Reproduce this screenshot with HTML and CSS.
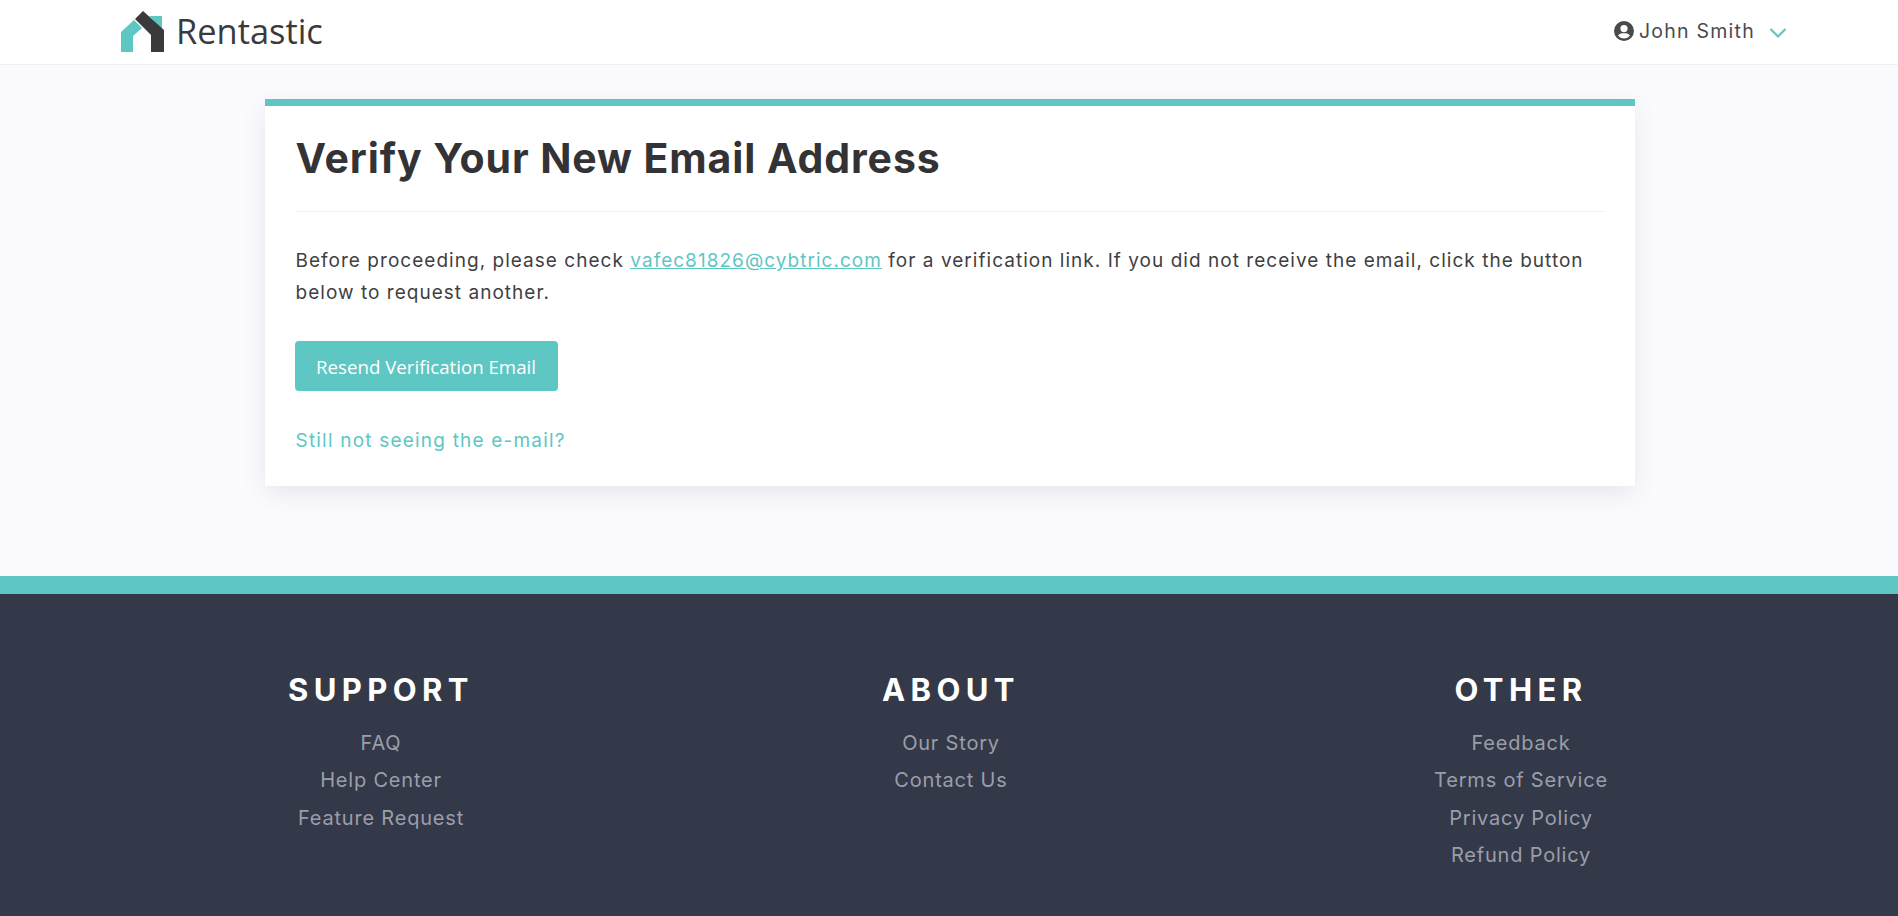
FILE: index.html
```html
<!DOCTYPE html>
<html lang="en">
<head>
  <meta charset="UTF-8" />
  <meta name="viewport" content="width=device-width, initial-scale=1.0" />
  <title>Rentastic</title>
  <link rel="stylesheet" href="styles.css">
</head>
<body>
  <header class="topbar">
    <a class="brand" href="#">
      <svg class="brand-logo" viewBox="0 0 44 41" width="44" height="41" aria-hidden="true">
        <path fill="#5ec6c3" d="M0 21 L13 9 L21 17 L12 25 L12 41 L0 41 Z" />
        <path fill="#5ec6c3" d="M28 5 L41 5 L41 18 Z" />
        <path fill="#3a3a3c" d="M22 0 L43 19 L43 41 L30 41 L30 24 L14 8 Z" />
      </svg>
      <span class="brand-name">Rentastic</span>
    </a>
    <div class="user-menu">
      <svg class="user-icon" viewBox="0 0 20 20" width="20" height="20" aria-hidden="true">
        <path fill="#4a4a4d" fill-rule="evenodd" d="M10 0a10 10 0 1 0 0 20a10 10 0 0 0 0-20zM10 4a3.6 3.6 0 1 1 0 7.2a3.6 3.6 0 0 1 0-7.2zM10 17.6a7.7 7.7 0 0 1-5.9-2.8c.7-1.6 2.3-2.6 4-2.6h3.8c1.7 0 3.3 1 4 2.6a7.7 7.7 0 0 1-5.9 2.8z" />
      </svg>
      <span class="user-name">John Smith</span>
      <svg class="user-caret" viewBox="0 0 18 12" width="18" height="12" aria-hidden="true">
        <path fill="none" stroke="#5ec6c3" stroke-width="2.2" d="M1.5 2 L9 9.5 L16.5 2" />
      </svg>
    </div>
  </header>

  <main class="content">
    <section class="card">
      <h1 class="card-title">Verify Your New Email Address</h1>
      <p class="card-text">Before proceeding, please check <a href="#" class="email-link">vafec81826@cybtric.com</a> for a verification link. If you did not receive the email, click the button below to request another.</p>
      <button class="resend-btn">Resend Verification Email</button>
      <a href="#" class="help-link">Still not seeing the e-mail?</a>
    </section>
  </main>

  <footer class="footer">
    <div class="footer-cols">
      <div class="footer-col">
        <h4>SUPPORT</h4>
        <a href="#">FAQ</a>
        <a href="#">Help Center</a>
        <a href="#">Feature Request</a>
      </div>
      <div class="footer-col">
        <h4>ABOUT</h4>
        <a href="#">Our Story</a>
        <a href="#">Contact Us</a>
      </div>
      <div class="footer-col">
        <h4>OTHER</h4>
        <a href="#">Feedback</a>
        <a href="#">Terms of Service</a>
        <a href="#">Privacy Policy</a>
        <a href="#">Refund Policy</a>
      </div>
    </div>
  </footer>
</body>
</html>
```

FILE: styles.css
```css
body { margin: 0; background: #fbfbff; color: #3f3f42; font-family: 'Inter', 'Noto Sans', sans-serif; font-size: 19px; height: 916px; overflow: hidden; }
a { text-decoration: none; }

.topbar { height: 65px; box-sizing: border-box; background: #fff; border-bottom: 1px solid #f0f0f3; display: flex; justify-content: space-between; align-items: center; padding: 0 111px 0 121px; }
.brand { display: flex; align-items: center; gap: 11px; color: #3a3a3c; }
.brand-logo { display: block; margin-bottom: 1px; }
.brand-name { font-family: 'Open Sans', sans-serif; font-size: 34.4px; margin-top: -3px; }
.user-menu { display: flex; align-items: center; margin-bottom: 3px; }
.user-name { font-size: 19.5px; margin-left: 5px; letter-spacing: 1.25px; color: #4a4a4d; }
.user-caret { margin-left: 14px; margin-top: 4px; }

.content { height: 511px; padding: 34px 0 0 1px; box-sizing: border-box; }
.card { width: 1370px; height: 387px; box-sizing: border-box; margin: 0 auto; padding: 0 30px 0 31px; background: #fff; border-top: 7px solid #5ec6c3; box-shadow: 0 8px 24px rgba(40,40,70,0.1); }
.card-title { margin: 0; padding: 29px 0; font-size: 41px; line-height: 47px; font-weight: 700; letter-spacing: 0.9px; color: #333336; border-bottom: 1px solid #f3f3f3; }
.card-text { margin: 33px 0 0; line-height: 32px; letter-spacing: 1.03px; }
.email-link { color: #5ec6c3; text-decoration: underline; }
.resend-btn { display: block; margin: 32px 0 0 -1px; width: 263px; height: 50px; padding: 0; background: #5ec6c3; border: none; border-radius: 4px; color: #fff; font-family: 'Open Sans', sans-serif; font-size: 18.7px; cursor: pointer; }
.help-link { display: block; margin-top: 34px; line-height: 32px; color: #5ec6c3; letter-spacing: 1.2px; font-size: 19px; }

.footer { height: 340px; box-sizing: border-box; background: #343949; border-top: 18px solid #5ec6c3; }
.footer-cols { display: grid; grid-template-columns: repeat(3, 570px); justify-content: center; padding: 77px 0 0 4px; }
.footer-col { text-align: center; }
.footer-col h4 { margin: 0 0 16px; font-size: 31px; line-height: 38px; font-weight: 700; letter-spacing: 5.4px; color: #fff; }
.footer-col a { display: block; font-size: 20px; line-height: 37.3px; color: #9b9eaa; letter-spacing: 0.8px; }
```
